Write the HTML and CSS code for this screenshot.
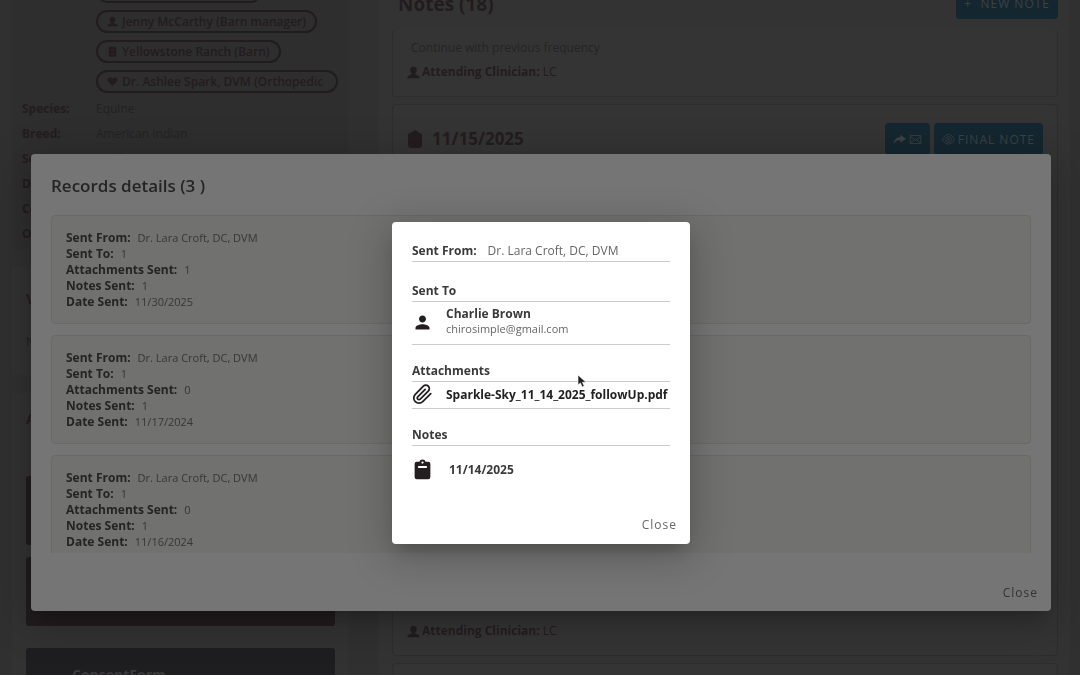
FILE: index.html
```html
<!DOCTYPE html>
<html lang="en">
<head>
    <meta charset="UTF-8">
    <meta name="viewport" content="width=device-width, initial-scale=1.0">
    <title>Records details</title>
    <link rel="stylesheet" href="styles.css">
</head>
<body>
    <svg class="sprite" aria-hidden="true">
        <symbol id="person" viewBox="0 0 24 24"><path d="M12 12c2.210 0 4-1.790 4-4s-1.790-4-4-4-4 1.790-4 4 1.790 4 4 4zm0 2c-2.670 0-8 1.340-8 4v2h16v-2c0-2.660-5.330-4-8-4z"/></symbol>
        <symbol id="user" viewBox="0 0 16 16"><path d="M8 1a4 4 0 0 0-4 4c0 2 1 3.500 2 4.300v1L2 12c-1 .5-1.500 1.500-1.500 3h15c0-1.500-.5-2.500-1.500-3l-4-1.700v-1c1-.8 2-2.300 2-4.300a4 4 0 0 0-4-4z"/></symbol>
        <symbol id="clipboard" viewBox="0 0 24 24"><path fill-rule="evenodd" d="M18.500 3h-3C15 1.400 13.700.5 12 .5S9 1.400 8.500 3h-3A2.500 2.500 0 0 0 3 5.500v15A2.500 2.500 0 0 0 5.500 23h13a2.500 2.500 0 0 0 2.500-2.500v-15A2.500 2.500 0 0 0 18.500 3zM12 2.800a1.300 1.300 0 1 1 0 2.600 1.300 1.300 0 0 1 0-2.600zM7 8h10v2.200H7z"/></symbol>
        <symbol id="tag" viewBox="0 0 16 18"><path d="M5 2l3-2 3 2 4 2v12l-2 2H3l-2-2V4z" stroke-linejoin="round"/></symbol>
    </svg>

    <div class="page">
        <aside class="sidebar">
            <div class="patient">
                <div class="chips">
                    <span class="chip chip-first"></span>
                    <span class="chip"><svg><use href="#user"/></svg>Jenny McCarthy (Barn manager)</span>
                    <span class="chip"><svg viewBox="0 0 16 16"><path fill-rule="evenodd" d="M4 1h8l1.500 2v10L12 15.500H4L2.500 13V3zM5.500 5v1.200h5V5zm0 5v1.200h5V10z"/></svg>Yellowstone Ranch (Barn)</span>
                    <span class="chip chip-long"><svg viewBox="0 0 16 16"><path d="M8 14L1.500 8C-1 4.500 3 0 8 3.500 13 0 17 4.500 14.500 8z"/></svg>Dr. Ashlee Spark, DVM (Orthopedic</span>
                </div>
                <dl class="facts">
                    <dt>Species:</dt><dd>Equine</dd>
                    <dt>Breed:</dt><dd>American Indian</dd>
                    <dt>Sex:</dt><dd>Gelding</dd>
                    <dt>DOB:</dt><dd></dd>
                    <dt>Color:</dt><dd></dd>
                    <dt>Other:</dt><dd></dd>
                </dl>
            </div>
            <div class="panel panel-vitals">
                <h3>Vitals</h3>
                <p>None</p>
            </div>
            <div class="panel panel-files">
                <h3>Alerts</h3>
                <div class="file"></div>
                <div class="file"></div>
                <div class="file file-last">ConsentForm</div>
            </div>
        </aside>

        <main class="notes">
            <header class="notes-head">
                <h2>Notes (18)</h2>
                <button class="btn">+&nbsp; NEW NOTE</button>
            </header>
            <article class="note note-first">
                <p>Continue with previous frequency</p>
                <div class="clinician"><svg><use href="#user"/></svg><span><b>Attending Clinician:</b> LC</span></div>
            </article>
            <article class="note note-tall">
                <div class="note-head">
                    <svg class="tag"><use href="#tag"/></svg>
                    <h3>11/15/2025</h3>
                    <button class="btn btn-share" aria-label="Share by email">
                        <svg viewBox="0 0 16 16"><path d="M9 2l7 5-7 5V9C5 9 2.500 10 1 14 1 8.500 4 5 9 5z"/></svg>
                        <svg class="outline" viewBox="0 0 16 16"><path d="M1.500 3h13v10h-13zM1.500 4L8 9l6.500-5M2 12.500l4-4M14 12.500l-4-4"/></svg>
                    </button>
                    <button class="btn">
                        <svg class="outline" viewBox="0 0 16 16"><path d="M.8 8C4-.2 12-.2 15.200 8 12 15.500 4 15.500.8 8z"/><circle cx="8" cy="8" r="3.500"/><circle cx="8" cy="8" r="1"/></svg>
                        FINAL NOTE
                    </button>
                </div>
                <div class="clinician"><svg><use href="#user"/></svg><span><b>Attending Clinician:</b> LC</span></div>
            </article>
            <article class="note"></article>
        </main>
    </div>

    <div class="overlay">
        <section class="modal records" role="dialog" aria-labelledby="recordsTitle">
            <h2 id="recordsTitle">Records details (3 )</h2>
            <div class="record-list">
                <div class="record">
                    <div><b>Sent From:</b><span>Dr. Lara Croft, DC, DVM</span></div>
                    <div><b>Sent To:</b><span>1</span></div>
                    <div><b>Attachments Sent:</b><span>1</span></div>
                    <div><b>Notes Sent:</b><span>1</span></div>
                    <div><b>Date Sent:</b><span>11/30/2025</span></div>
                </div>
                <div class="record">
                    <div><b>Sent From:</b><span>Dr. Lara Croft, DC, DVM</span></div>
                    <div><b>Sent To:</b><span>1</span></div>
                    <div><b>Attachments Sent:</b><span>0</span></div>
                    <div><b>Notes Sent:</b><span>1</span></div>
                    <div><b>Date Sent:</b><span>11/17/2024</span></div>
                </div>
                <div class="record">
                    <div><b>Sent From:</b><span>Dr. Lara Croft, DC, DVM</span></div>
                    <div><b>Sent To:</b><span>1</span></div>
                    <div><b>Attachments Sent:</b><span>0</span></div>
                    <div><b>Notes Sent:</b><span>1</span></div>
                    <div><b>Date Sent:</b><span>11/16/2024</span></div>
                </div>
            </div>
            <footer><button class="close">Close</button></footer>
        </section>
    </div>

    <div class="overlay">
        <section class="modal detail" role="dialog" aria-label="Record">
            <div class="row-title from"><b>Sent From:</b><span>Dr. Lara Croft, DC, DVM</span></div>
            <h4 class="row-title">Sent To</h4>
            <div class="item recipient">
                <svg><use href="#person"/></svg>
                <div>
                    <b>Charlie Brown</b>
                    <small>chirosimple@gmail.com</small>
                </div>
            </div>
            <h4 class="row-title">Attachments</h4>
            <div class="item attachment">
                <svg class="outline clip" viewBox="0 0 24 24"><path d="M21.440 11.050l-9.190 9.190a6 6 0 0 1-8.490-8.490l9.190-9.190a4 4 0 0 1 5.660 5.660l-9.200 9.190a2 2 0 0 1-2.830-2.830l8.490-8.480"/></svg>
                <b>Sparkle-Sky_11_14_2025_followUp.pdf</b>
            </div>
            <h4 class="row-title">Notes</h4>
            <div class="item note-link">
                <svg><use href="#clipboard"/></svg>
                <b>11/14/2025</b>
            </div>
            <footer><button class="close">Close</button></footer>
        </section>
    </div>

    <svg class="cursor" viewBox="0 0 10 14"><path d="M1 1v10l2.400-2 1.800 4 2-1-1.800-3.700H9z" fill="#222" stroke="#fff" stroke-width=".6"/></svg>
</body>
</html>
```
FILE: styles.css
```css
* {
    box-sizing: border-box;
}
body {
    margin: 0;
    height: 100vh;
    overflow: hidden;
    background: #303030;
    color: #231c1e;
    font-family: "Open Sans", "Noto Sans", sans-serif;
    font-size: 12px;
    line-height: 16px;
}
h2, h3, h4, p, dl, dd {
    margin: 0;
}
button {
    border: 0;
    font-family: inherit;
    cursor: pointer;
}
.sprite {
    display: none;
}
svg {
    flex: none;
    fill: currentColor;
}
.outline {
    fill: none;
    stroke: currentColor;
}

/* page behind the dialogs */
.page {
    display: grid;
    grid-template-columns: 336px 1fr;
    gap: 30px;
    height: 100vh;
    padding: 0 10px 0 12px;
    overflow: hidden;
}
.sidebar {
    display: flex;
    flex-direction: column;
    gap: 18px;
}
.patient {
    height: 249px;
    padding: 0 10px;
    background: #2e2e2e;
}
.chips {
    display: flex;
    flex-direction: column;
    align-items: flex-start;
    gap: 7px;
    margin: -20px 0 3px 74px;
}
.chip {
    display: flex;
    align-items: center;
    gap: 4px;
    height: 23px;
    padding: 0 9px;
    border: 2px solid #211c1d;
    border-radius: 12px;
    font-weight: 600;
    white-space: nowrap;
}
.chip svg {
    width: 11px;
    height: 11px;
}
.chip-first {
    width: 166px;
}
.chip-long {
    padding-right: 13px;
}
.facts {
    display: grid;
    grid-template-columns: 74px 1fr;
    grid-auto-rows: 25px;
    line-height: 25px;
}
.facts dt {
    font-weight: 700;
}
.facts dd {
    color: #222;
}
.panel {
    padding: 20px 13px 20px 14px;
    background: #323232;
}
.panel h3 {
    font-size: 14px;
    line-height: 24px;
}
.panel-vitals {
    height: 108px;
}
.panel-vitals p {
    padding-top: 23px;
}
.panel-files {
    flex: 1;
    padding-top: 14px;
}
.file {
    height: 69px;
    margin-bottom: 12px;
    border-radius: 3px;
    background: #211b1d;
}
.panel-files h3 {
    margin-bottom: 45px;
}
.file-last {
    margin-top: 22px;
    padding: 19px 46px;
    background: #1e1d20;
    color: #3a3a3a;
    font-size: 14px;
    font-weight: 700;
}
.notes {
    display: flex;
    flex-direction: column;
    gap: 7px;
    padding: 0 12px 0 14px;
    background: #333;
}
.notes-head {
    display: flex;
    justify-content: space-between;
    height: 24px;
}
.notes-head h2 {
    padding-left: 6px;
    font-size: 19px;
    line-height: 24px;
    margin-top: -8px;
}
.notes-head .btn {
    margin-top: -13px;
}
.btn {
    display: flex;
    align-items: center;
    gap: 3px;
    height: 32px;
    padding: 0 8px;
    border-radius: 4px;
    background: #14262f;
    color: #3b4246;
    font-size: 12px;
    letter-spacing: 1px;
}
.btn svg {
    width: 13px;
    height: 13px;
}
.note {
    height: 552px;
    flex: none;
    padding: 18px 14px 16px;
    border: 1px solid #2d2d2d;
    border-radius: 4px;
    background: #343434;
}
.note-first {
    height: 67px;
    margin-top: -1px;
    padding-top: 10px;
    border-top: 0;
}
.note-first p {
    padding-left: 4px;
    color: #242424;
}
.clinician {
    display: flex;
    align-items: center;
    gap: 2px;
    margin-top: 8px;
}
.clinician svg {
    width: 13px;
    height: 13px;
}
.note-tall {
    display: flex;
    flex-direction: column;
    justify-content: space-between;
}
.note-head {
    display: flex;
    align-items: center;
    gap: 4px;
}
.note-head h3 {
    flex: 1;
    padding-left: 5px;
    font-size: 17px;
}
.tag {
    width: 16px;
    height: 18px;
}

/* dialogs */
.overlay {
    position: fixed;
    inset: 0;
    display: flex;
    align-items: center;
    justify-content: center;
    padding: 90px 29px 0 31px;
}
.modal {
    border-radius: 4px;
    box-shadow: 0 11px 15px -7px rgba(0, 0, 0, .2), 0 9px 40px 6px rgba(0, 0, 0, .2);
}
.modal footer {
    display: flex;
    justify-content: flex-end;
}
.close {
    padding: 0;
    background: none;
    font-size: 12px;
    line-height: 24px;
    letter-spacing: 1px;
}
.records {
    width: 100%;
    padding: 20px 20px 6px;
    background: #757575;
    color: #242424;
}
.records h2 {
    margin-bottom: 17px;
    font-size: 17px;
    font-weight: 600;
    line-height: 24px;
}
.record-list {
    display: flex;
    flex-direction: column;
    gap: 11px;
    max-height: 338px;
    overflow: hidden;
}
.record {
    flex: none;
    padding: 14px 14px 13px;
    border: 1px solid #696967;
    border-radius: 4px;
    background: #71716f;
}
.record span {
    margin-left: 7px;
    color: #363636;
    font-size: 11px;
}
.records footer {
    margin-right: -7px;
    padding-top: 28px;
}
.records .close {
    color: #333;
}
.detail {
    width: 298px;
    padding: 20px 20px 7px;
    background: #fff;
    color: #3a3a3a;
}
.row-title {
    padding-bottom: 1px;
    border-bottom: 1px solid #ccc;
    font-size: 12px;
    font-weight: 700;
    line-height: 18px;
}
.from {
    margin-bottom: 20px;
    font-weight: 400;
}
.from span {
    margin-left: 11px;
    color: #666;
}
.item {
    display: flex;
    align-items: center;
    gap: 13px;
    margin-bottom: 17px;
    border-bottom: 1px solid #ccc;
}
.item svg {
    width: 21px;
    height: 21px;
    color: #231f20;
}
.item b {
    display: block;
    white-space: nowrap;
}
.item small {
    display: block;
    color: #666;
    font-size: 11px;
    line-height: 14px;
}
.recipient {
    height: 43px;
}
.recipient div {
    padding-bottom: 4px;
}
.attachment {
    height: 27px;
}
.attachment b {
    color: #222;
}
.clip {
    stroke-width: 2;
    stroke-linecap: round;
}
.note-link {
    gap: 16px;
    height: 48px;
    margin-bottom: 19px;
    border: 0;
}
.detail footer {
    margin-right: -7px;
}
.detail .close {
    color: #666;
}
.cursor {
    position: fixed;
    left: 577px;
    top: 374px;
    width: 10px;
    height: 14px;
}
```
